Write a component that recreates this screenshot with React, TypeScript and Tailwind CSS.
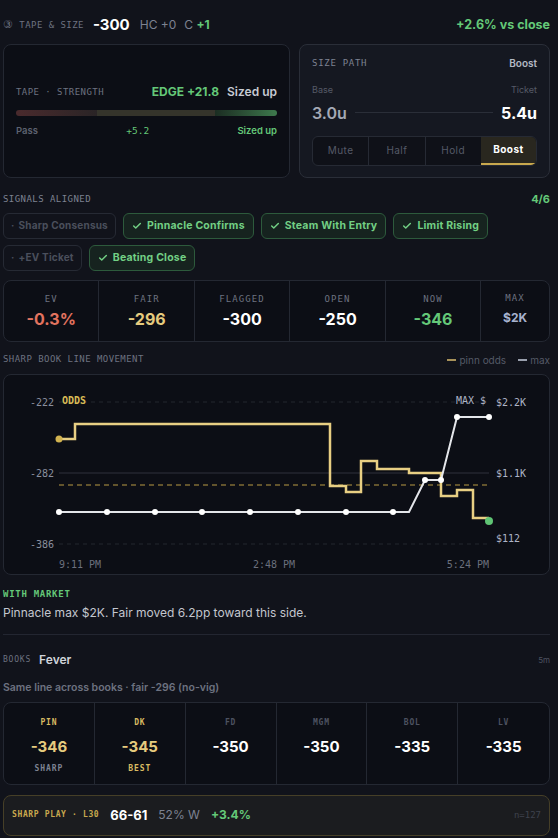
import { Check } from 'lucide-react'

const mono = { fontFamily: '"DejaVu Sans Mono", "Liberation Mono", monospace' }

interface Chip {
  readonly label: string
  readonly on: boolean
}

const chipRows: Chip[][] = [
  [
    { label: 'Sharp Consensus', on: false },
    { label: 'Pinnacle Confirms', on: true },
    { label: 'Steam With Entry', on: true },
    { label: 'Limit Rising', on: true },
  ],
  [
    { label: '+EV Ticket', on: false },
    { label: 'Beating Close', on: true },
  ],
]

const stats = [
  { k: 'EV', v: '-0.3%', c: 'text-[#e2735f]' },
  { k: 'FAIR', v: '-296', c: 'text-[#e6cb7e]' },
  { k: 'FLAGGED', v: '-300', c: 'text-white' },
  { k: 'OPEN', v: '-250', c: 'text-white' },
  { k: 'NOW', v: '-346', c: 'text-[#64c878]' },
]

const books = [
  { k: 'PIN', v: '-346', sub: 'SHARP', kc: 'text-[#d9bb62]', vc: 'text-[#e6cb7e]', sc: 'text-[#7d8291]' },
  { k: 'DK', v: '-345', sub: 'BEST', kc: 'text-[#d9bb62]', vc: 'text-[#e6cb7e]', sc: 'text-[#d9bb62]' },
  { k: 'FD', v: '-350' },
  { k: 'MGM', v: '-350' },
  { k: 'BOL', v: '-335' },
  { k: 'LV', v: '-335' },
]

function SignalChip({ label, on }: Chip) {
  if (on) {
    return (
      <span className="h-[26px] px-[8px] flex items-center gap-[5px] rounded-md border border-[#2d5a3c] bg-[#16231f] text-[#72cf84] text-[10.5px] font-bold tracking-[0.02em]">
        <Check size={10} strokeWidth={3.5} />
        {label}
      </span>
    )
  }
  return (
    <span className="h-[26px] px-[7px] flex items-center gap-[4px] rounded-md border border-[#262a34] text-[#4a4f5c] text-[10px] font-bold tracking-[0.02em]">
      <span>·</span>
      {label}
    </span>
  )
}

function LineChart() {
  const maxDots = [55, 103, 151, 198, 246, 294, 342, 389]
  return (
    <svg width="547" height="199" viewBox="0 0 547 199" className="block">
      <g style={mono} fontSize="10" fill="#8a8f9d">
        <line x1="55" x2="485" y1="27" y2="27" stroke="#23262f" strokeDasharray="4 4" />
        <line x1="55" x2="485" y1="98" y2="98" stroke="#23262f" strokeWidth="1.5" />
        <line x1="55" x2="485" y1="169" y2="169" stroke="#23262f" strokeDasharray="4 4" />
        <line x1="55" x2="485" y1="110" y2="110" stroke="#b89a45" strokeDasharray="5 4" />
        <text x="50" y="31" textAnchor="end">-222</text>
        <text x="50" y="102" textAnchor="end">-282</text>
        <text x="50" y="173" textAnchor="end">-386</text>
        <text x="492" y="31" fill="#aeb5c6">$2.2K</text>
        <text x="492" y="102" fill="#aeb5c6">$1.1K</text>
        <text x="492" y="167" fill="#aeb5c6">$112</text>
        <text x="58" y="29" fill="#d9bb55" fontWeight="bold">ODDS</text>
        <text x="482" y="29" fill="#aeb5c6" textAnchor="end">MAX $</text>
        <text x="55" y="193" fill="#6b707d">9:11 PM</text>
        <text x="270" y="193" fill="#6b707d" textAnchor="middle">2:48 PM</text>
        <text x="485" y="193" fill="#6b707d" textAnchor="end">5:24 PM</text>
      </g>
      <polyline
        points="55,64 71,64 71,49 326,49 326,111 342,111 342,117 357,117 357,86 373,86 373,94 405,94 405,98 437,98 437,121 453,121 453,115 469,115 469,143 485,143"
        fill="none"
        stroke="#e8cf83"
        strokeWidth="2.5"
      />
      <circle cx="55" cy="64" r="3.5" fill="#d2b350" />
      <polyline
        points="55,137 405,137 421,105 437,105 453,42 485,42"
        fill="none"
        stroke="#e4e6ea"
        strokeWidth="2"
      />
      {maxDots.map((x) => (
        <circle key={x} cx={x} cy="137" r="3" fill="#ffffff" />
      ))}
      <circle cx="421" cy="105" r="3" fill="#ffffff" />
      <circle cx="437" cy="105" r="3" fill="#ffffff" />
      <circle cx="453" cy="42" r="3" fill="#ffffff" />
      <circle cx="485" cy="42" r="3" fill="#ffffff" />
      <circle cx="485" cy="146" r="4" fill="#5fc474" />
    </svg>
  )
}

export default function App() {
  return (
    <div
      className="w-[558px] h-[838px] overflow-hidden bg-[#11131b] text-white pl-[3px] pr-[8px] pt-[14px]"
      style={{ fontFamily: 'Inter, "Liberation Sans", sans-serif' }}
    >
      {/* header */}
      <div className="flex items-center h-[22px]">
        <span className="text-[9px] text-[#6d7280] tracking-[0.05em]" style={mono}>
          <span className="text-[11px]">③</span> TAPE &amp; SIZE
        </span>
        <span className="ml-[9px] text-[15px] font-bold">-300</span>
        <span className="ml-[10px] text-[12px] text-[#7d8291]">HC +0</span>
        <span className="ml-[8px] text-[12px] text-[#7d8291]">
          C <span className="text-[#64c878] font-bold">+1</span>
        </span>
        <span className="ml-auto text-[12.5px] font-bold text-[#64c878]">+2.6% vs close</span>
      </div>

      {/* cards */}
      <div className="mt-[8px] flex gap-[9px] h-[134px]">
        <div className="w-[287px] rounded-lg border border-[#242832] bg-[#0c0e15] px-3 flex flex-col justify-center">
          <div className="flex items-center">
            <span className="text-[9px] text-[#6d7280] tracking-[0.05em]" style={mono}>
              TAPE · STRENGTH
            </span>
            <span className="ml-auto text-[12px] font-bold text-[#64c878]">EDGE +21.8</span>
            <span className="ml-2 text-[12px] font-semibold text-[#c7cad3]">Sized up</span>
          </div>
          <div className="mt-[9px] h-[6px] rounded-full overflow-hidden flex">
            <div className="w-[81px] bg-gradient-to-r from-[#4a2a2d] to-[#2a2426]" />
            <div className="w-[118px] bg-[#35342b]" />
            <div className="flex-1 bg-gradient-to-r from-[#1b2d22] to-[#3e7a4d]" />
          </div>
          <div className="mt-[8px] flex items-center text-[9.5px]">
            <span className="text-[#5d6270] font-semibold">Pass</span>
            <span className="flex-1 text-center text-[#64c878]" style={mono}>+5.2</span>
            <span className="text-[#64c878] font-semibold">Sized up</span>
          </div>
        </div>

        <div className="flex-1 rounded-lg border border-[#2a2e38] bg-[#151821] px-3 pt-[11px]">
          <div className="flex items-center justify-between">
            <span className="text-[9px] text-[#7d8291] tracking-[0.08em]" style={mono}>
              SIZE PATH
            </span>
            <span className="text-[10px] font-semibold text-[#b3b8c4]">Boost</span>
          </div>
          <div className="mt-[12px] flex justify-between text-[9px] text-[#555a67]">
            <span>Base</span>
            <span>Ticket</span>
          </div>
          <div className="mt-[4px] flex items-center gap-2">
            <span className="text-[16px] font-semibold text-[#a4a9b5]">3.0u</span>
            <div className="flex-1 h-px bg-[#2a2e38]" />
            <span className="text-[16px] font-bold text-white">5.4u</span>
          </div>
          <div className="mt-[11px] h-[30px] flex rounded-md border border-[#262a34] bg-[#0f1118] overflow-hidden text-[10px] tracking-[0.04em]">
            <div className="flex-1 flex items-center justify-center text-[#555a67] border-r border-[#262a34]">Mute</div>
            <div className="flex-1 flex items-center justify-center text-[#555a67] border-r border-[#262a34]">Half</div>
            <div className="flex-1 flex items-center justify-center text-[#555a67]">Hold</div>
            <div className="flex-1 flex items-center justify-center font-bold text-white bg-[#29271f] border-b-2 border-[#c9a94e]">
              Boost
            </div>
          </div>
        </div>
      </div>

      {/* signals */}
      <div className="mt-[13px] flex items-center justify-between">
        <span className="text-[9px] text-[#7d8291] tracking-[0.05em]" style={mono}>
          SIGNALS ALIGNED
        </span>
        <span className="text-[11px] font-bold text-[#64c878]">4/6</span>
      </div>
      <div className="mt-[5px] flex flex-col gap-[6px]">
        {chipRows.map((row, i) => (
          <div key={i} className="flex gap-[7px]">
            {row.map((c) => (
              <SignalChip key={c.label} label={c.label} on={c.on} />
            ))}
          </div>
        ))}
      </div>

      {/* stats */}
      <div className="mt-[9px] h-[62px] grid grid-cols-[1fr_1fr_1fr_1fr_1fr_0.71fr] rounded-lg border border-[#242832] bg-[#0c0e15] overflow-hidden">
        {stats.map((s) => (
          <div key={s.k} className="flex flex-col items-center justify-center gap-[1px] pt-[3px] border-r border-[#242832]">
            <span className="text-[9px] text-[#6d7280] tracking-[0.12em]" style={mono}>
              {s.k}
            </span>
            <span className={`text-[16px] font-bold ${s.c}`}>{s.v}</span>
          </div>
        ))}
        <div className="flex flex-col items-center justify-center gap-[3px] pb-[2px]">
          <span className="text-[9px] text-[#6d7280] tracking-[0.12em]" style={mono}>
            MAX
          </span>
          <span className="text-[12px] font-bold text-[#a7b3cf]">$2K</span>
        </div>
      </div>

      {/* chart header */}
      <div className="mt-[11px] flex items-center">
        <span className="text-[9px] text-[#6d7280] tracking-[0.05em]" style={mono}>
          SHARP BOOK LINE MOVEMENT
        </span>
        <span className="ml-auto flex items-center gap-[3px] text-[10px] text-[#555a67]">
          <span className="w-[9px] h-[2px] bg-[#a8925a]" />
          pinn odds
        </span>
        <span className="ml-[12px] flex items-center gap-[3px] text-[10px] text-[#555a67]">
          <span className="w-[9px] h-[2px] bg-[#9aa0ad]" />
          max
        </span>
      </div>
      <div className="mt-[6px] rounded-lg border border-[#242832] bg-[#0c0e15] overflow-hidden">
        <LineChart />
      </div>

      {/* with market */}
      <div className="mt-[13px] text-[9px] font-bold text-[#64c878] tracking-[0.08em]" style={mono}>
        WITH MARKET
      </div>
      <div className="mt-[3px] text-[12px] text-[#c4c7cf]">Pinnacle max $2K. Fair moved 6.2pp toward this side.</div>
      <div className="mt-[12px] h-px bg-[#232631]" />

      {/* books */}
      <div className="mt-[16px] flex items-center">
        <span className="text-[8px] text-[#6d7280] tracking-[0.1em]" style={mono}>
          BOOKS
        </span>
        <span className="ml-[8px] text-[12px] font-semibold text-[#d0d3da]">Fever</span>
        <span className="ml-auto text-[8px] text-[#4d5260]">5m</span>
      </div>
      <div className="mt-[11px] text-[10.5px] font-semibold text-[#6d7280]">
        Same line across books · fair -296 (no-vig)
      </div>
      <div className="mt-[6px] h-[83px] grid grid-cols-6 rounded-lg border border-[#242832] bg-[#0c0e15] overflow-hidden">
        {books.map((b, i) => (
          <div
            key={b.k}
            className={`flex flex-col items-center pt-[14px] ${i < 5 ? 'border-r border-[#242832]' : ''}`}
          >
            <span className={`text-[8px] font-bold tracking-[0.1em] ${b.kc ?? 'text-[#4d5260]'}`} style={mono}>
              {b.k}
            </span>
            <span className={`mt-[7px] text-[15px] font-bold ${b.vc ?? 'text-white'}`}>{b.v}</span>
            {b.sub && (
              <span className={`mt-[5px] text-[8px] font-bold tracking-[0.12em] ${b.sc}`} style={mono}>
                {b.sub}
              </span>
            )}
          </div>
        ))}
      </div>

      {/* sharp play */}
      <div className="mt-[10px] h-[41px] rounded-lg border border-[#463f27] bg-[#1b1c1f] flex items-center px-[8px]">
        <span className="text-[8px] font-bold text-[#c9a94e] tracking-[0.08em]" style={mono}>
          SHARP PLAY · L30
        </span>
        <span className="ml-[11px] text-[13px] font-bold text-white">66-61</span>
        <span className="ml-[11px] text-[12px] text-[#7d8291]">52% W</span>
        <span className="ml-[11px] text-[12px] font-bold text-[#64c878]">+3.4%</span>
        <span className="ml-auto text-[9px] text-[#3e424d]" style={mono}>
          n=127
        </span>
      </div>
    </div>
  )
}
